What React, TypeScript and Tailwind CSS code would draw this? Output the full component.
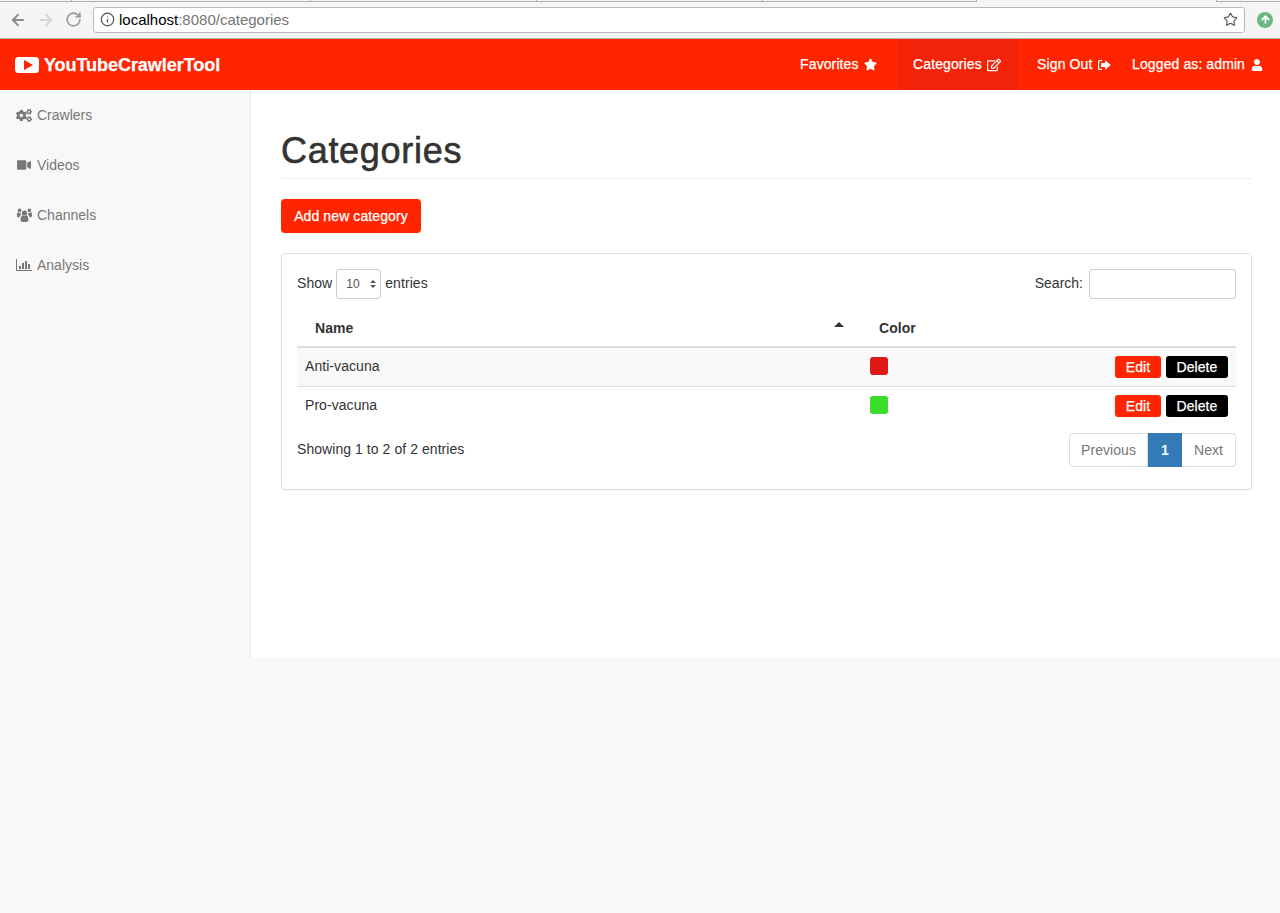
import { FaCogs, FaRegEdit, FaStar, FaUser, FaVideo } from 'react-icons/fa';
import { ArrowLeft, ArrowRight, ArrowUp, Info, RotateCw, Star } from 'lucide-react';

const FONT_STACK = "font-['Liberation_Sans',Arial,sans-serif]";

const CATEGORIES = [
  { name: 'Anti-vacuna', color: 'bg-[#de1a16]', rowClass: 'bg-[#f9f9f9]' },
  { name: 'Pro-vacuna', color: 'bg-[#3bdd2b]', rowClass: 'bg-white' },
];

function SignOutIcon({ className }: { className?: string }) {
  return (
    <svg viewBox="0 0 14 12" className={className} fill="currentColor">
      <path d="M5 1H2.6C1.7 1 1 1.7 1 2.6v6.8C1 10.300 1.700 11 2.600 11H5V9.800H2.800c-.4 0-.6-.3-.6-.6V2.800c0-.4.3-.6.6-.6H5z" />
      <path d="M8.200 1.200 13.800 6 8.200 10.800V7.900H4.200V4.100h4z" />
    </svg>
  );
}

function ChartIcon({ className }: { className?: string }) {
  return (
    <svg viewBox="0 0 16 12" className={className} fill="currentColor">
      <path d="M0 0h1v11h15v1H0z" />
      <path d="M3 7h2v3H3zM6 4h2v6H6zM9 2h2v8H9zM12 5h2v5h-2z" />
    </svg>
  );
}

function UsersIcon({ className }: { className?: string }) {
  return (
    <svg viewBox="0 0 15 14" className={className} fill="currentColor">
      <circle cx="7.500" cy="5" r="2.600" />
      <circle cx="2.600" cy="2.400" r="1.800" />
      <circle cx="12.400" cy="2.400" r="1.800" />
      <path d="M3.600 12c0-3 1-4.800 2-4.800.6.500 1.200.8 1.900.8s1.300-.3 1.900-.8c1 0 2 1.800 2 4.800 0 1.200-.8 2-2 2H5.600c-1.200 0-2-.8-2-2z" />
      <path d="M0 6.300C0 5 .4 4.300 1 4.300c.5.400 1 .6 1.600.6.300 0 .600 0 .9-.2 0 .8.300 1.500.8 2.100-.9.300-1.700 1.200-2 2.700H1.200C.5 9.500 0 9 0 8.300z" />
      <path d="M15 6.300c0-1.300-.4-2-1-2-.5.400-1 .6-1.600.6-.3 0-.600 0-.9-.2 0 .8-.3 1.500-.8 2.100.9.300 1.700 1.200 2 2.700h.1c.7 0 2.200-.5 2.200-1.200z" />
    </svg>
  );
}

function TabStrip() {
  return (
    <div className="flex h-[2px]">
      <div className="w-[72px] border-b border-r border-[#b0b0b0]" />
      <div className="w-[239px] border-b border-r border-[#b0b0b0]" />
      <div className="w-[226px] border-b border-r border-[#b0b0b0]" />
      <div className="w-[226px] border-b border-r border-[#b0b0b0]" />
      <div className="w-[214px] border-b border-r border-[#b0b0b0]" />
      <div className="w-[239px]" />
      <div className="flex-1 border-b border-l border-[#b0b0b0]" />
    </div>
  );
}

function BrowserBar() {
  return (
    <div className="h-[39px] shrink-0 bg-[#f5f5f5] border-b border-[#b4b4b4]">
      <TabStrip />
      <div className="flex items-center h-[36px] pb-[1px]">
        <div className="flex items-center w-[93px] pl-[9px] text-[#8b8b8b]">
          <ArrowLeft size={18} strokeWidth={2.4} />
          <ArrowRight size={18} strokeWidth={2.4} className="text-[#d6d6d6] ml-[10px]" />
          <RotateCw size={17} strokeWidth={2.4} className="text-[#9a9a9a] ml-[10px]" />
        </div>
        <div className="flex items-center w-[1152px] h-[26px] bg-white border border-[#b9b9b9] rounded-[3px] pl-[6px] pr-[6px]">
          <Info size={15} strokeWidth={2} className="text-[#555]" />
          <span className="ml-[4px] pt-[2px] text-[15px] text-black">
            localhost<span className="text-[#757575]">:8080/categories</span>
          </span>
          <Star size={15} strokeWidth={1.8} className="ml-auto text-[#555]" />
        </div>
        <div className="flex items-center justify-center w-[16px] h-[16px] ml-[12px] rounded-full bg-[#6cb684] text-white">
          <ArrowUp size={11} strokeWidth={4} />
        </div>
      </div>
    </div>
  );
}

function TopNav() {
  return (
    <nav className="flex items-center h-[51px] shrink-0 bg-[#ff2500] text-white text-[14px] tracking-[0.1px] [-webkit-text-stroke:0.25px_white]">
      <div className="flex items-center pl-[15px] pt-[1px]">
        <svg viewBox="0 0 24 16" className="w-[24px] h-[16px]" fill="white">
          <path fillRule="evenodd" d="M3.500 0h17A3.500 3.500 0 0 1 24 3.500v9a3.500 3.500 0 0 1-3.500 3.500h-17A3.500 3.500 0 0 1 0 12.500v-9A3.500 3.500 0 0 1 3.500 0zM9 3v10l9-5z" />
        </svg>
        <span className="ml-[5px] text-[18px] font-bold tracking-[-0.05px]">YouTubeCrawlerTool</span>
      </div>
      <div className="ml-auto flex items-center h-full">
        <a className="flex items-center h-full w-[98px] gap-[5px]">
          Favorites <FaStar size={13} />
        </a>
        <a className="flex items-center h-full w-[120px] pl-[15px] gap-[5px] bg-[#f3230a]">
          Categories <FaRegEdit size={14} />
        </a>
        <a className="flex items-center h-full w-[114px] pl-[19px] gap-[5px]">
          Sign Out <SignOutIcon className="w-[14px] h-[12px]" />
        </a>
        <a className="flex items-center h-full pr-[17px] gap-[6px]">
          Logged as: admin <FaUser size={12} />
        </a>
      </div>
    </nav>
  );
}

function SideItem({ icon, label }: { icon: React.ReactNode; label: string }) {
  return (
    <a className="flex items-center h-[50px] pl-[16px] gap-[5px] text-[14px] text-[#777]">
      <span className="flex justify-center w-[16px]">{icon}</span>
      {label}
    </a>
  );
}

function Sidebar() {
  return (
    <aside className="w-[251px] shrink-0 bg-[#f8f8f8] border-r border-[#e7e7e7]">
      <SideItem icon={<FaCogs size={17} />} label="Crawlers" />
      <SideItem icon={<FaVideo size={14} />} label="Videos" />
      <SideItem icon={<UsersIcon className="w-[15px] h-[14px]" />} label="Channels" />
      <SideItem icon={<ChartIcon className="w-[16px] h-[12px]" />} label="Analysis" />
    </aside>
  );
}

function CategoriesTable() {
  return (
    <table className="w-full table-fixed border-collapse text-[14px]">
      <thead>
        <tr className="h-[37px] border-b-2 border-[#ddd] text-[#333]">
          <th className="relative w-[565px] pl-[18px] pt-[1px] text-left font-bold">
            Name
            <span className="absolute right-[18px] top-[12px] border-x-[5px] border-b-[5px] border-x-transparent border-b-[#333]" />
          </th>
          <th className="w-[120px] pl-[17px] pt-[1px] text-left font-bold">Color</th>
          <th />
        </tr>
      </thead>
      <tbody>
        {CATEGORIES.map((category) => (
          <tr key={category.name} className={`h-[39px] border-b border-[#ddd] last:border-b-0 ${category.rowClass}`}>
            <td className="pl-[8px] text-[#333]">{category.name}</td>
            <td className="pl-[8px] align-top pt-[9px]">
              <div className={`w-[18px] h-[18px] rounded-[3px] ${category.color}`} />
            </td>
            <td className="pr-[8px]">
              <div className="flex justify-end gap-[5px] text-white [-webkit-text-stroke:0.25px_white]">
                <button className="w-[46px] h-[22px] pt-[1px] rounded-[3px] bg-[#ff2500]">Edit</button>
                <button className="w-[62px] h-[22px] pt-[1px] rounded-[3px] bg-black">Delete</button>
              </div>
            </td>
          </tr>
        ))}
      </tbody>
    </table>
  );
}

function Pagination() {
  return (
    <div className="flex h-[34px] text-[14px] text-[#777]">
      <a className="flex items-center justify-center w-[79px] bg-white border border-[#ddd] rounded-l-[4px]">Previous</a>
      <a className="flex items-center justify-center w-[34px] bg-[#337ab7] text-white font-bold">1</a>
      <a className="flex items-center justify-center w-[54px] bg-white border border-[#ddd] border-l-0 rounded-r-[4px]">Next</a>
    </div>
  );
}

export default function App() {
  return (
    <div className={`flex flex-col min-h-[913px] bg-[#f8f8f8] ${FONT_STACK}`}>
      <BrowserBar />
      <TopNav />
      <div className="flex h-[568px]">
        <Sidebar />
        <main className="flex-1 bg-white pl-[30px] pr-[28px]">
          <h1 className="mt-[41px] pb-[7px] text-[36px] leading-[40px] font-medium tracking-[0.7px] text-[#333] border-b border-[#eee] [-webkit-text-stroke:0.6px_#333]">
            Categories
          </h1>
          <button className="mt-[20px] w-[140px] h-[34px] rounded-[4px] bg-[#ff2500] text-white text-[14px] tracking-[0.1px] [-webkit-text-stroke:0.25px_white]">
            Add new category
          </button>
          <section className="mt-[20px] h-[237px] border border-[#ddd] rounded-[4px] shadow-[0_1px_1px_rgba(0,0,0,0.05)] px-[15px] pt-[15px] text-[14px] text-[#333] tracking-[0.06px]">
            <div className="flex items-center justify-between h-[30px]">
              <div className="flex items-center gap-[4px]">
                <span className="pb-[2px]">Show</span>
                <div className="flex items-center w-[45px] h-[30px] pl-[9px] bg-white border border-[#ccc] rounded-[3px] text-[12px] text-[#555]">
                  10
                  <span className="ml-[10px] flex flex-col gap-[2px]">
                    <span className="border-x-[3px] border-b-[3px] border-x-transparent border-b-[#555]" />
                    <span className="border-x-[3px] border-t-[3px] border-x-transparent border-t-[#555]" />
                  </span>
                </div>
                <span className="pb-[2px]">entries</span>
              </div>
              <div className="flex items-center gap-[6px]">
                <span className="pb-[2px] tracking-normal">Search:</span>
                <input className="w-[147px] h-[30px] bg-white border border-[#ccc] rounded-[3px]" />
              </div>
            </div>
            <div className="mt-[11px]">
              <CategoriesTable />
            </div>
            <div className="flex items-start justify-between mt-[8px]">
              <span className="pt-[6px] leading-[20px]">Showing 1 to 2 of 2 entries</span>
              <Pagination />
            </div>
          </section>
        </main>
      </div>
    </div>
  );
}
